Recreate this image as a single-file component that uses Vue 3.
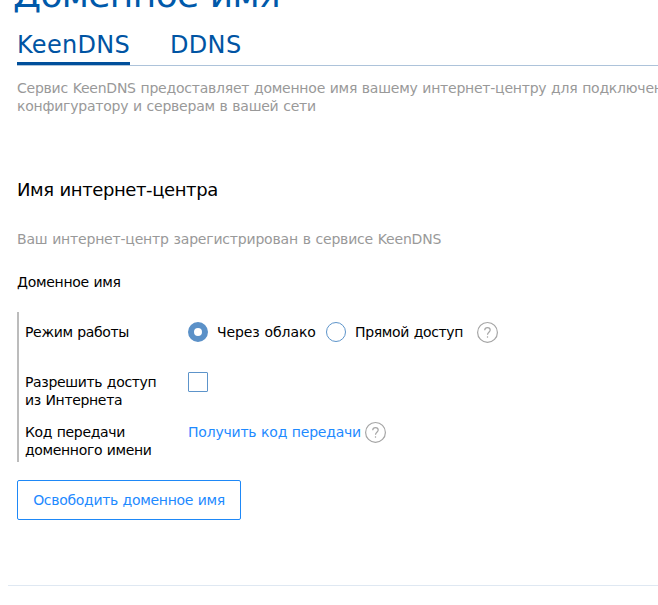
<script setup>
import { ref } from 'vue'

const tabs = ['KeenDNS', 'DDNS']
const activeTab = ref('KeenDNS')
const mode = ref('cloud')
const allowAccess = ref(false)
</script>

<template>
  <main class="page">
    <h1 class="title"><span>Доменное имя</span></h1>
    <nav class="tabs">
      <button
        v-for="tab in tabs"
        :key="tab"
        class="tab"
        :class="{ active: tab === activeTab }"
        @click="activeTab = tab"
      >{{ tab }}</button>
    </nav>
    <p class="intro">
      Сервис KeenDNS предоставляет доменное имя вашему интернет-центру для подключения к<br />
      конфигуратору и серверам в вашей сети
    </p>
    <h2 class="section-title">Имя интернет-центра</h2>
    <p class="status">Ваш интернет-центр зарегистрирован в сервисе KeenDNS</p>
    <p class="domain">Доменное имя</p>

    <section class="settings">
      <div class="row row-mode">
        <div class="label">Режим работы</div>
        <div class="control">
          <label class="option">
            <input v-model="mode" type="radio" value="cloud" class="radio" />
            <span class="option-cloud">Через облако</span>
          </label>
          <label class="option">
            <input v-model="mode" type="radio" value="direct" class="radio" />
            <span class="option-direct">Прямой доступ</span>
          </label>
          <svg class="help help-mode" viewBox="0 0 22 22">
            <circle cx="10.5" cy="11.4" r="9.9" />
            <path d="M7.7 9.3C7.8 7.5 8.9 6.6 10.5 6.6c1.6 0 2.7.9 2.7 2.4 0 2.2-2.7 2.3-2.7 4.7" />
            <path d="M10.5 15.3v1.4" />
          </svg>
        </div>
      </div>
      <div class="row row-access">
        <div class="label">Разрешить доступ<br />из Интернета</div>
        <div class="control">
          <input v-model="allowAccess" type="checkbox" class="checkbox" />
        </div>
      </div>
      <div class="row">
        <div class="label">Код передачи<br />доменного имени</div>
        <div class="control">
          <a class="link">Получить код передачи</a>
          <svg class="help help-code" viewBox="0 0 22 22">
            <circle cx="10.5" cy="11.4" r="9.9" />
            <path d="M7.7 9.3C7.8 7.5 8.9 6.6 10.5 6.6c1.6 0 2.7.9 2.7 2.4 0 2.2-2.7 2.3-2.7 4.7" />
            <path d="M10.5 15.3v1.4" />
          </svg>
        </div>
      </div>
    </section>

    <button class="release"><span>Освободить доменное имя</span></button>
    <hr class="divider" />
  </main>
</template>

<style>
body {
  margin: 0;
  background: #fff;
}
</style>

<style scoped>
.page {
  box-sizing: border-box;
  width: 100%;
  height: 605px;
  overflow: hidden;
  padding-left: 17px;
  font: 14px/18px Verdana, "DejaVu Sans", sans-serif;
  word-spacing: 0.5px;
  color: #000;
}
h1, h2, p {
  margin: 0;
  font-weight: 400;
  white-space: nowrap;
}
button {
  font: inherit;
  word-spacing: inherit;
  background: none;
  cursor: pointer;
}
.title {
  height: 40px;
  margin-top: -25px;
  margin-left: -4px;
  font-size: 36px;
  line-height: 40px;
  letter-spacing: -0.65px;
  color: #0059aa;
}
.tabs {
  display: flex;
  gap: 40px;
  box-sizing: border-box;
  height: 51px;
  padding-top: 13px;
  border-bottom: 1px solid #adc3da;
}
.tab {
  box-sizing: border-box;
  height: 37px;
  padding: 0;
  border: 0;
  border-bottom: 3px solid transparent;
  font-size: 24px;
  line-height: 34px;
  letter-spacing: 0.3px;
  color: #0054a3;
}
.tab.active {
  border-bottom-color: #004f9b;
}
.intro {
  margin-top: 13px;
  letter-spacing: -0.23px;
  color: #999;
}
.section-title {
  margin-top: 63px;
  font-size: 18px;
  line-height: 24px;
  letter-spacing: -0.4px;
}
.status {
  margin-top: 28px;
  letter-spacing: -0.19px;
  color: #999;
}
.domain {
  margin-top: 25px;
  letter-spacing: -0.29px;
}
.settings {
  box-sizing: border-box;
  height: 150px;
  margin-top: 21px;
  padding: 11px 0 0 6px;
  border-left: 2px solid #bcbcbc;
}
.row {
  display: flex;
}
.row-mode {
  height: 50px;
}
.row-access {
  height: 50px;
}
.label {
  width: 163px;
  letter-spacing: -0.34px;
  white-space: nowrap;
}
.control {
  display: flex;
  align-items: flex-start;
  white-space: nowrap;
}
.option {
  display: flex;
  margin-right: 10px;
}
.option-cloud {
  width: 99px;
  margin-left: 9px;
  letter-spacing: -0.09px;
}
.option-direct {
  width: 108px;
  margin-left: 9px;
  letter-spacing: -0.34px;
}
.radio, .checkbox {
  appearance: none;
  box-sizing: border-box;
  width: 20px;
  height: 20px;
  margin: -1px 0 0;
  border: 1px solid #5d94ca;
  background: #fff;
}
.radio {
  border-radius: 50%;
}
.radio:checked {
  border: 6px solid #5b91c8;
}
.checkbox {
  border-radius: 1px;
}
.link {
  width: 173px;
  letter-spacing: -0.22px;
  color: #1e8aff;
}
.help {
  width: 22px;
  height: 22px;
  margin-top: -2px;
  fill: none;
  stroke: #a5a5a5;
  stroke-width: 1.2;
}
.help-mode {
  margin-left: 4px;
}
.help-code {
  margin-left: 4px;
}
.release {
  display: block;
  box-sizing: border-box;
  width: 224px;
  height: 40px;
  margin-top: 18px;
  padding: 0;
  border: 1px solid #1e88f7;
  border-radius: 2px;
  letter-spacing: -0.31px;
  color: #1e8aff;
  white-space: nowrap;
}
.divider {
  height: 1px;
  margin: 65px 0 0 -9px;
  border: 0;
  background: #dfe8f2;
}
</style>
